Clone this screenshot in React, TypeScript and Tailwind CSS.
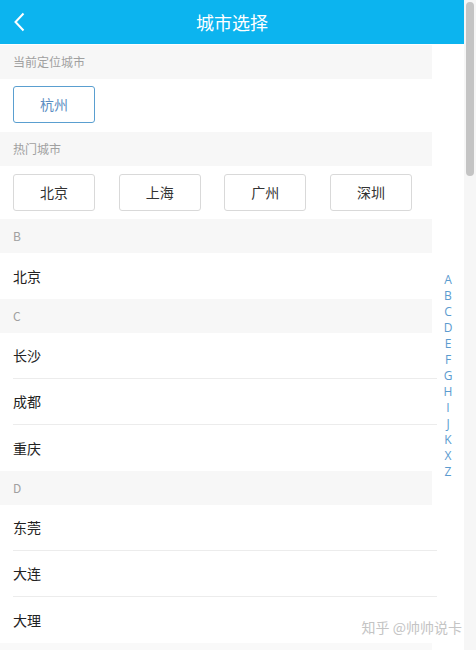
import React from 'react'

const hotCities = ['北京', '上海', '广州', '深圳']

const groups = [
  { letter: 'B', cities: ['北京'] },
  { letter: 'C', cities: ['长沙', '成都', '重庆'] },
  { letter: 'D', cities: ['东莞', '大连', '大理'] },
]

const indexLetters = ['A', 'B', 'C', 'D', 'E', 'F', 'G', 'H', 'I', 'J', 'K', 'X', 'Z']

function SectionTitle({ children }: { children: React.ReactNode }) {
  return (
    <div className="h-[34px] flex items-center pl-[13px] bg-[#f7f7f7] text-[12px] text-[#a0a0a0]">
      {children}
    </div>
  )
}

function CityButton({ name, active = false }: { name: string; active?: boolean }) {
  return (
    <div
      className={
        active
          ? 'w-[82px] h-[37px] flex items-center justify-center rounded-[3px] border border-[#5a9fd0] text-[14px] text-[#5b8ec2]'
          : 'w-[82px] h-[37px] flex items-center justify-center rounded-[3px] border border-[#d9d9d9] text-[14px] text-[#333]'
      }
    >
      {name}
    </div>
  )
}

export default function App() {
  return (
    <div
      className="relative w-[476px] h-[650px] overflow-hidden flex bg-white"
      style={{ fontFamily: '"Noto Sans CJK SC", "Noto Sans", sans-serif' }}
    >
      <div className="w-[464px] flex flex-col">
        {/* header */}
        <div className="h-[44px] shrink-0 bg-[#0cb4ef] relative flex items-center justify-center">
          <svg className="absolute left-[13px] top-[12px]" width="13" height="20" viewBox="0 0 13 20">
            <polyline points="10.5,1.5 2.5,10 10.5,18.5" fill="none" stroke="#fff" strokeWidth="2" />
          </svg>
          <span className="text-white text-[18px]">城市选择</span>
        </div>

        <div className="flex flex-1 min-h-0">
          {/* main list */}
          <div className="w-[432px]">
            <div className="h-px" />
            <SectionTitle>当前定位城市</SectionTitle>
            <div className="h-[53px] flex items-center pl-[13px] pb-[2px]">
              <CityButton name="杭州" active />
            </div>

            <SectionTitle>热门城市</SectionTitle>
            <div className="h-[53px] flex items-center justify-between pl-[13px] pr-[20px]">
              {hotCities.map((c) => (
                <CityButton key={c} name={c} />
              ))}
            </div>

            {groups.map((g) => (
              <div key={g.letter}>
                <SectionTitle>{g.letter}</SectionTitle>
                <div className="pl-[13px]">
                  {g.cities.map((c, i) => (
                    <div
                      key={c}
                      className={
                        i < g.cities.length - 1
                          ? 'h-[46px] flex items-center border-b border-[#ececec] text-[14px] text-[#222] mr-[-5px]'
                          : 'h-[46px] flex items-center text-[14px] text-[#222]'
                      }
                    >
                      {c}
                    </div>
                  ))}
                </div>
              </div>
            ))}
            <div className="h-[8px] bg-[#f9f9f9]" />
          </div>

          {/* alphabet index */}
          <div className="w-[32px] flex flex-col items-center pt-[228px]">
            {indexLetters.map((l) => (
              <span key={l} className="text-[12px] leading-[16px] text-[#5b9bcf]" style={{ fontFamily: '"Open Sans", sans-serif' }}>
                {l}
              </span>
            ))}
          </div>
        </div>
      </div>

      {/* scrollbar */}
      <div className="w-[12px] bg-[#f6f6f6] flex justify-center pt-[2px]">
        <div className="w-[8px] h-[174px] rounded-full bg-[#c4c4c4]" />
      </div>

      {/* watermark */}
      <div className="absolute right-[14px] bottom-[12px] text-[14px] text-[#c4c4c4]">知乎 @帅帅说卡</div>
    </div>
  )
}
